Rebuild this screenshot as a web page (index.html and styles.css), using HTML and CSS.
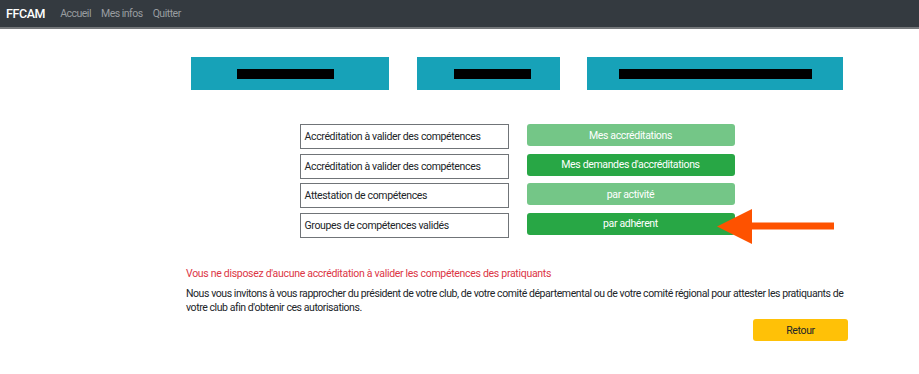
FILE: index.html
```html
<!DOCTYPE html>
<html lang="fr">

<head>
    <meta charset="UTF-8">
    <meta name="viewport" content="width=device-width, initial-scale=1.0">
    <title>FFCAM</title>
    <link rel="stylesheet" href="styles.css">
</head>

<body>

    <nav class="navbar">
        <span class="brand">FFCAM</span>
        <a href="#">Accueil</a>
        <a href="#">Mes infos</a>
        <a href="#">Quitter</a>
    </nav>

    <main class="page">

        <!-- TILES -->
        <div class="tiles">
            <div class="tile tile-a"><span class="hidden-text"></span></div>
            <div class="tile tile-b"><span class="hidden-text"></span></div>
            <div class="tile tile-c"><span class="hidden-text"></span></div>
        </div>

        <!-- MENU -->
        <div class="menu">
            <div class="menu-row">
                <div class="menu-label">Accréditation à valider des compétences</div>
                <button class="btn btn-light-green">Mes accréditations</button>
            </div>
            <div class="menu-row">
                <div class="menu-label">Accréditation à valider des compétences</div>
                <button class="btn btn-green">Mes demandes d'accréditations</button>
            </div>
            <div class="menu-row">
                <div class="menu-label">Attestation de compétences</div>
                <button class="btn btn-light-green">par activité</button>
            </div>
            <div class="menu-row">
                <div class="menu-label">Groupes de compétences validés</div>
                <button class="btn btn-green">par adhérent</button>
                <svg class="arrow" width="118" height="35" viewBox="0 0 118 35">
                    <polygon points="0,17.5 35,0 35,35" fill="#fe5200" />
                    <rect x="34" y="13.5" width="83" height="7" fill="#fe5200" />
                </svg>
            </div>
        </div>

        <p class="warning-text">Vous ne disposez d'aucune accréditation à valider les compétences des pratiquants</p>
        <p class="info-text">Nous vous invitons à vous rapprocher du président de votre club, de votre comité départemental ou de votre comité régional pour attester les pratiquants de votre club afin d'obtenir ces autorisations.</p>

        <div class="actions">
            <button class="btn btn-yellow">Retour</button>
        </div>

    </main>

</body>

</html>
```

FILE: styles.css
```css
body {
    margin: 0;
    font-family: Roboto, "Liberation Sans", sans-serif;
    font-size: 10.5px;
    letter-spacing: -0.35px;
    color: #212529;
    background-color: #fff;
}

.navbar {
    display: flex;
    align-items: center;
    height: 26px;
    padding-left: 6px;
    padding-bottom: 1px;
    background-color: #343a40;
    border-bottom: 2px solid #74777a;
}

.navbar .brand {
    color: #fff;
    font-size: 12.5px;
    font-weight: 500;
    letter-spacing: -0.4px;
    margin-right: 15px;
}

.navbar a {
    color: #999da0;
    text-decoration: none;
    letter-spacing: -0.5px;
    margin-right: 10px;
}

.page {
    width: 662px;
    margin-left: 186px;
}

.tiles {
    display: flex;
    justify-content: space-between;
    padding: 0 5px;
    margin-top: 28px;
}

.tile {
    display: flex;
    align-items: center;
    justify-content: center;
    height: 33px;
    background-color: #17a2b8;
}

.tile .hidden-text {
    height: 10px;
    background-color: #000;
}

.tile-a { width: 198px; }
.tile-a .hidden-text { width: 97px; margin-left: -9px; }
.tile-b { width: 143px; }
.tile-b .hidden-text { width: 77px; margin-left: 8px; }
.tile-c { width: 256px; }
.tile-c .hidden-text { width: 193px; }

.menu {
    display: flex;
    flex-direction: column;
    align-items: center;
    gap: 4.5px;
    margin-top: 34px;
}

.menu-row {
    position: relative;
    display: flex;
    align-items: flex-start;
    gap: 18px;
}

.menu-label {
    box-sizing: border-box;
    width: 209px;
    height: 25px;
    line-height: 23px;
    padding-left: 4px;
    border: 1px solid #707478;
}

.btn {
    border: none;
    border-radius: 3px;
    font-family: inherit;
    font-size: 10.5px;
    letter-spacing: -0.35px;
    color: #fff;
    cursor: pointer;
}

.menu-row .btn {
    width: 208px;
    height: 22px;
}

.btn-green {
    background-color: #28a745;
}

.btn-light-green {
    background-color: #74c687;
}

.btn-yellow {
    width: 95px;
    height: 22px;
    color: #212529;
    background-color: #ffc107;
}

.arrow {
    position: absolute;
    left: 417px;
    top: -3.5px;
}

.warning-text {
    margin: 29px 0 6px;
    line-height: 14px;
    letter-spacing: -0.3px;
    color: #dc3545;
}

.info-text {
    margin: 0;
    line-height: 14px;
    letter-spacing: -0.43px;
}

.actions {
    display: flex;
    justify-content: flex-end;
    margin-top: 4.5px;
}
```
